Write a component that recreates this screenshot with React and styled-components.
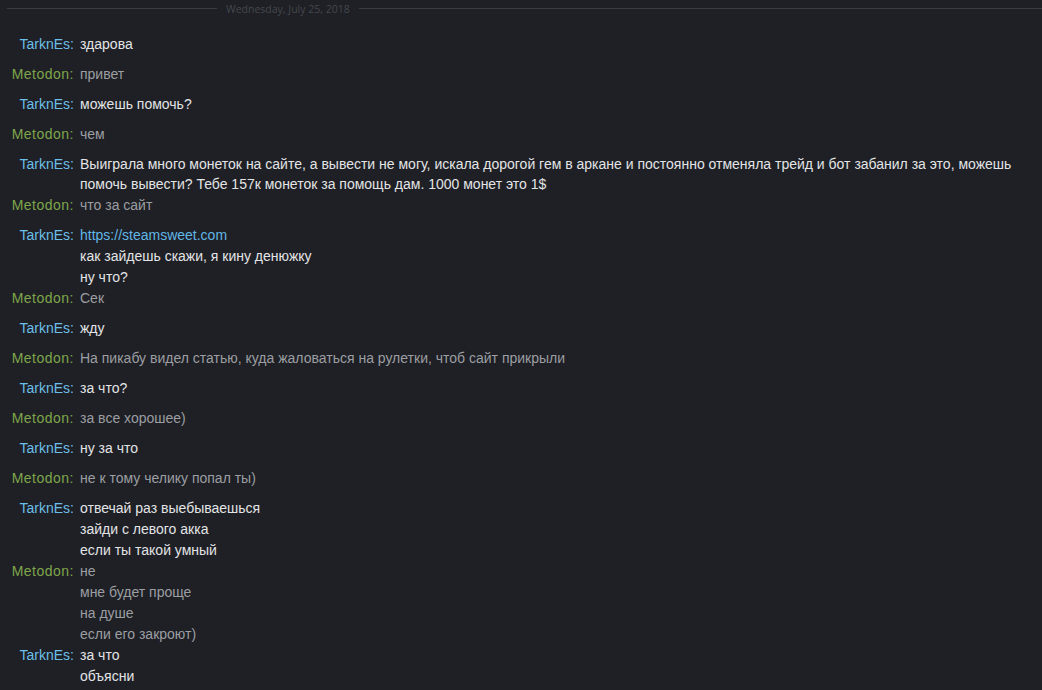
import React from "react";
import styled, { createGlobalStyle } from "styled-components";

const GlobalStyle = createGlobalStyle`
  html, body {
    margin: 0;
    padding: 0;
    background: #1e2025;
    height: 100%;
    overflow: hidden;
  }
`;

const T = "TarknEs";
const M = "Metodon";

const blocks = [
  [{ who: T, lines: ["здарова"] }],
  [{ who: M, lines: ["привет"] }],
  [{ who: T, lines: ["можешь помочь?"] }],
  [{ who: M, lines: ["чем"] }],
  [
    {
      who: T,
      lines: [
        "Выиграла много монеток на сайте, а вывести не могу, искала дорогой гем в аркане и постоянно отменяла трейд и бот забанил за это, можешь помочь вывести? Тебе 157к монеток за помощь дам. 1000 монет это 1$",
      ],
    },
    { who: M, lines: ["что за сайт"] },
  ],
  [
    {
      who: T,
      lines: [{ link: "https://steamsweet.com" }, "как зайдешь скажи, я кину денюжку", "ну что?"],
    },
    { who: M, lines: ["Сек"] },
  ],
  [{ who: T, lines: ["жду"] }],
  [{ who: M, lines: ["На пикабу видел статью, куда жаловаться на рулетки, чтоб сайт прикрыли"] }],
  [{ who: T, lines: ["за что?"] }],
  [{ who: M, lines: ["за все хорошее)"] }],
  [{ who: T, lines: ["ну за что"] }],
  [{ who: M, lines: ["не к тому челику попал ты)"] }],
  [
    { who: T, lines: ["отвечай раз выебываешься", "зайди с левого акка", "если ты такой умный"] },
    { who: M, lines: ["не", "мне будет проще", "на душе", "если его закроют)"] },
    { who: T, lines: ["за что", "объясни"] },
  ],
];

const Chat = styled.div`
  font-family: "Liberation Sans", Arial, sans-serif;
  padding: 0 12px 0 0;
`;

const DateDivider = styled.div`
  display: flex;
  align-items: center;
  gap: 9px;
  height: 17px;
  margin-bottom: 7px;
  padding-left: 7px;
  color: #44474c;
  font-family: "Open Sans", "Liberation Sans", sans-serif;
  font-size: 10.5px;

  &::before,
  &::after {
    content: "";
    height: 1px;
    background: #3a3c41;
  }
  &::before {
    width: 210px;
  }
  &::after {
    flex: 1;
    margin-right: -12px;
  }
`;

const Block = styled.div`
  display: flex;
  flex-direction: column;
  gap: 1px;
  padding-top: 10px;
`;

const Row = styled.div`
  display: grid;
  grid-template-columns: 74px 1fr;
  column-gap: 6px;
  font-size: 14px;
  line-height: 20px;
`;

const Name = styled.div`
  text-align: right;
  color: ${({ $self }) => ($self ? "#6cbfe8" : "#7ea64b")};
  letter-spacing: ${({ $self }) => ($self ? "0" : "0.5px")};
`;

const Lines = styled.div`
  display: flex;
  flex-direction: column;
  gap: 1px;
  color: ${({ $self }) => ($self ? "#e3e4e6" : "#9c9ea2")};
`;

const Link = styled.span`
  color: #62b6e6;
`;

const App = () => (
  <>
    <GlobalStyle />
    <Chat>
      <DateDivider>Wednesday, July 25, 2018</DateDivider>
      {blocks.map((block, i) => (
        <Block key={i}>
          {block.map((msg, j) => {
            const self = msg.who === T;
            return (
              <Row key={j}>
                <Name $self={self}>{msg.who}:</Name>
                <Lines $self={self}>
                  {msg.lines.map((l, k) =>
                    typeof l === "string" ? (
                      <div key={k}>{l}</div>
                    ) : (
                      <Link key={k}>{l.link}</Link>
                    )
                  )}
                </Lines>
              </Row>
            );
          })}
        </Block>
      ))}
    </Chat>
  </>
);

export default App;
